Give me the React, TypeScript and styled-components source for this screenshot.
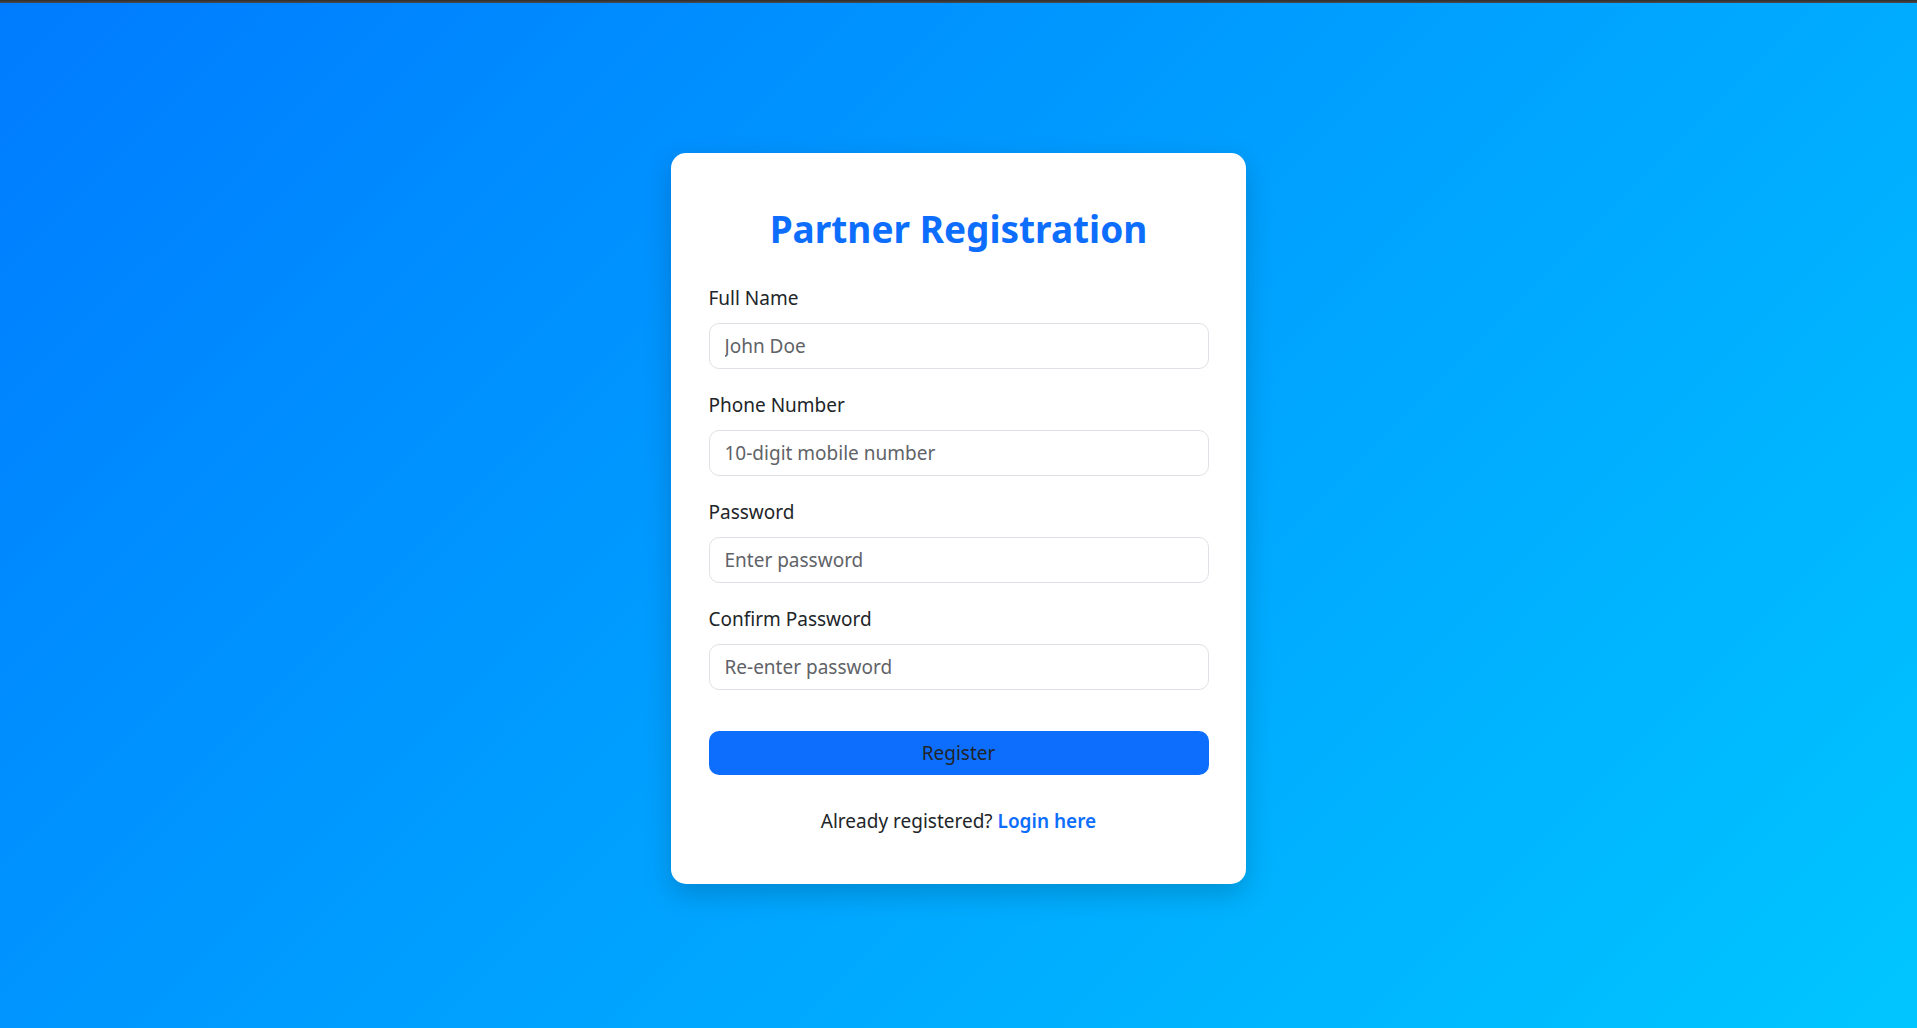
import React from "react";
import styled, { createGlobalStyle } from "styled-components";

const GlobalStyle = createGlobalStyle`
  * { box-sizing: border-box; }
  html, body { margin: 0; padding: 0; }
  body {
    font-family: "Noto Sans", "Open Sans", sans-serif;
    color: #212529;
    background: linear-gradient(135deg, #007bff 0%, #00c6ff 100%);
    min-height: 100vh;
  }
`;

const TopBar = styled.div`
  height: 3px;
  background: linear-gradient(180deg, #2e2e2e, #4a4a4a);
`;

const Page = styled.main`
  min-height: 1025px;
  display: flex;
  justify-content: center;
  align-items: flex-start;
  padding-top: 150px;
`;

const Card = styled.section`
  width: 575px;
  background: #ffffff;
  border-radius: 15px;
  padding: 52px 37.5px 48px;
  box-shadow: 0 10px 28px rgba(0, 0, 0, 0.18);
  display: flex;
  flex-direction: column;
`;

const Title = styled.h2`
  margin: 0 0 30px;
  text-align: center;
  color: #0d6efd;
  font-size: 37px;
  line-height: 48px;
  font-weight: 700;
`;

const Field = styled.div`
  display: flex;
  flex-direction: column;
  margin-bottom: 21px;
`;

const Label = styled.label`
  font-size: 19px;
  line-height: 30px;
  margin-bottom: 10px;
  color: #212529;
`;

const Input = styled.input`
  height: 46px;
  width: 100%;
  border: 1px solid #dee2e6;
  border-radius: 10px;
  padding: 0 15px;
  font-family: inherit;
  font-size: 19px;
  line-height: 30px;
  color: #212529;
  background: #fff;
  outline: none;
  &::placeholder {
    color: #5f6368;
    opacity: 1;
  }
`;

const Button = styled.button`
  margin-top: 20px;
  height: 44px;
  width: 100%;
  border: none;
  border-radius: 10px;
  background: #0d6efd;
  color: #212529;
  font-family: inherit;
  font-size: 19px;
  line-height: 30px;
  cursor: pointer;
`;

const Footer = styled.p`
  margin: 31px 0 0;
  text-align: center;
  font-size: 19px;
  line-height: 30px;
  color: #212529;
`;

const LoginLink = styled.a`
  color: #0d6efd;
  font-weight: 600;
  text-decoration: none;
`;

const fields = [
  { id: "fullName", label: "Full Name", type: "text", placeholder: "John Doe" },
  { id: "phone", label: "Phone Number", type: "tel", placeholder: "10-digit mobile number" },
  { id: "password", label: "Password", type: "password", placeholder: "Enter password" },
  { id: "confirm", label: "Confirm Password", type: "password", placeholder: "Re-enter password" },
];

export default function App() {
  return (
    <>
      <GlobalStyle />
      <TopBar />
      <Page>
        <Card>
          <Title>Partner Registration</Title>
          {fields.map((f) => (
            <Field key={f.id}>
              <Label htmlFor={f.id}>{f.label}</Label>
              <Input id={f.id} type={f.type} placeholder={f.placeholder} />
            </Field>
          ))}
          <Button type="button">Register</Button>
          <Footer>
            Already registered? <LoginLink href="#">Login here</LoginLink>
          </Footer>
        </Card>
      </Page>
    </>
  );
}
